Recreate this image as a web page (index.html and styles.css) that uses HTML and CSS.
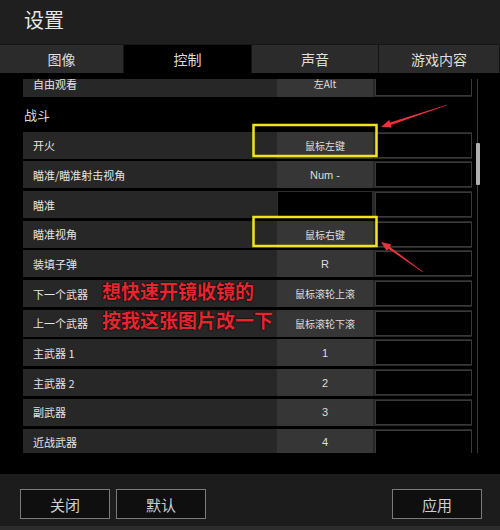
FILE: index.html
```html
<!DOCTYPE html>
<html lang="zh">
<head>
<meta charset="utf-8">
<link rel="stylesheet" href="styles.css">
</head>
<body>
<div class="page">
  <div class="header"><span class="title">设置</span></div>
  <div class="tabs">
    <div class="tab">图像</div>
    <div class="tab active">控制</div>
    <div class="tab">声音</div>
    <div class="tab">游戏内容</div>
  </div>
  <div class="content">
    <div class="viewport">
      <div class="list">
        <div class="row"><div class="label">自由观看</div><div class="key filled">左Alt</div><div class="key2"></div></div>
        <div class="section">战斗</div>
        <div class="row"><div class="label">开火</div><div class="key filled">鼠标左键</div><div class="key2"></div></div>
        <div class="row"><div class="label">瞄准/瞄准射击视角</div><div class="key filled latin">Num -</div><div class="key2"></div></div>
        <div class="row"><div class="label">瞄准</div><div class="key empty"></div><div class="key2"></div></div>
        <div class="row"><div class="label">瞄准视角</div><div class="key filled">鼠标右键</div><div class="key2"></div></div>
        <div class="row"><div class="label">装填子弹</div><div class="key filled latin">R</div><div class="key2"></div></div>
        <div class="row"><div class="label">下一个武器</div><div class="key filled">鼠标滚轮上滚</div><div class="key2"></div></div>
        <div class="row"><div class="label">上一个武器</div><div class="key filled">鼠标滚轮下滚</div><div class="key2"></div></div>
        <div class="row"><div class="label">主武器 1</div><div class="key filled latin">1</div><div class="key2"></div></div>
        <div class="row"><div class="label">主武器 2</div><div class="key filled latin">2</div><div class="key2"></div></div>
        <div class="row"><div class="label">副武器</div><div class="key filled latin">3</div><div class="key2"></div></div>
        <div class="row"><div class="label">近战武器</div><div class="key filled latin">4</div><div class="key2"></div></div>
      </div>
    </div>
    <div class="scrolltrack"><div class="thumb"></div></div>
  </div>
  <div class="footer">
    <div class="btn-group">
      <button class="btn">关闭</button>
      <button class="btn">默认</button>
    </div>
    <button class="btn">应用</button>
  </div>
  <div class="bottom-strip"></div>

  <svg class="annot" width="500" height="530" viewBox="0 0 500 530">
    <rect x="253.5" y="125" width="123" height="31" fill="none" stroke="#f0e41c" stroke-width="2.5"/>
    <rect x="253.5" y="217" width="123" height="29" fill="none" stroke="#f0e41c" stroke-width="2.5"/>
    <polygon fill="#e8323c" points="381,127 391.8,127.6 390.9,125.0 447.1,105.2 446.9,104.8 390.1,122.6 389.2,120.0"/>
    <polygon fill="#e8323c" points="381,242 386.8,251.1 388.4,248.8 422.8,272.2 423.2,271.8 389.8,246.8 391.4,244.5"/>
  </svg>
  <div class="note note1">想快速开镜收镜的</div>
  <div class="note note2">按我这张图片改一下</div>
</div>
</body>
</html>
```
FILE: styles.css
```css
* { box-sizing: border-box; }
html, body { margin: 0; padding: 0; background: #000; }
body {
  font-family: "Noto Sans CJK SC", "Noto Sans", "Liberation Sans", sans-serif;
  color: #dcdcdc;
}
.page {
  position: relative;
  width: 500px;
  height: 530px;
  overflow: hidden;
  background: #000;
}
.header {
  height: 44px;
  background: #1f1f1f;
  padding-left: 24px;
  display: flex;
  align-items: center;
}
.title {
  font-size: 20px;
  color: #e6e6e6;
  line-height: 1;
  margin-top: -4px;
}
.tabs {
  display: grid;
  grid-template-columns: 124px 128px 127px 1fr;
  height: 29px;
  background: #111;
  border-top: 1px solid #161616;
}
.tab {
  background: #2b2b2b;
  border-right: 1px solid #141414;
  display: flex;
  align-items: center;
  justify-content: center;
  font-size: 14px;
  color: #dedede;
}
.tab.active { background: #000; }
.content {
  height: 401px;
  background: #000;
  display: flex;
  padding: 6px 0 0 23px;
}
.viewport {
  width: 449px;
  height: 374px;
  overflow: hidden;
  flex: none;
}
.list {
  margin-top: -9px;
  display: flex;
  flex-direction: column;
  gap: 2.7px;
}
.row {
  height: 27px;
  flex: none;
  display: grid;
  grid-template-columns: 252px 96px 97px;
  column-gap: 2px;
  background: #272727;
}
.label {
  font-size: 11px;
  color: #e4e4e4;
  padding-left: 10px;
  display: flex;
  align-items: center;
}
.key {
  display: flex;
  align-items: center;
  justify-content: center;
  font-size: 10px;
  color: #dedede;
}
.key.latin { font-family: "Liberation Sans", "Noto Sans CJK SC", sans-serif; font-size: 11px; }
.key.filled { background: #363636; }
.key.empty { background: #000; border: 1px solid #2e2e2e; }
.key2 {
  background: #000;
  border: 1px solid #3a3a3a;
  margin: 1px 0;
}
.section {
  height: 29.3px;
  flex: none;
  font-size: 13px;
  color: #dcdcdc;
  padding-left: 1px;
  display: flex;
  align-items: center;
}
.scrolltrack {
  width: 4px;
  height: 374px;
  margin-left: 4px;
  flex: none;
  position: relative;
  background: linear-gradient(to right, transparent 1.5px, #3a3a3a 1.5px, #3a3a3a 2.5px, transparent 2.5px);
}
.thumb {
  margin-top: 64px;
  height: 42px;
  width: 4px;
  background: #b0b0b0;
  border-radius: 1px;
}
.footer {
  height: 52px;
  background: #1c1c1c;
  display: flex;
  justify-content: space-between;
  align-items: flex-start;
  padding: 15px 18px 0 20px;
}
.btn-group { display: flex; gap: 6px; }
.btn {
  width: 90px;
  height: 30px;
  background: #0f0f0f;
  border: 1.5px solid #7a7a7a;
  color: #cfcfcf;
  font-family: "Noto Sans CJK SC", sans-serif;
  font-size: 15px;
  padding: 0;
  display: flex;
  align-items: center;
  justify-content: center;
}
.bottom-strip {
  height: 5px;
  background: #2c2c2c;
}
.annot {
  position: absolute;
  left: 0;
  top: 0;
  pointer-events: none;
}
.note {
  position: absolute;
  left: 102px;
  font-size: 19px;
  font-weight: bold;
  line-height: 24px;
  color: #e42630;
  letter-spacing: 0;
  text-shadow: 0 0 2px #000, 0 0 1px #000;
}
.note1 { top: 279px; }
.note2 { top: 308px; }
```
